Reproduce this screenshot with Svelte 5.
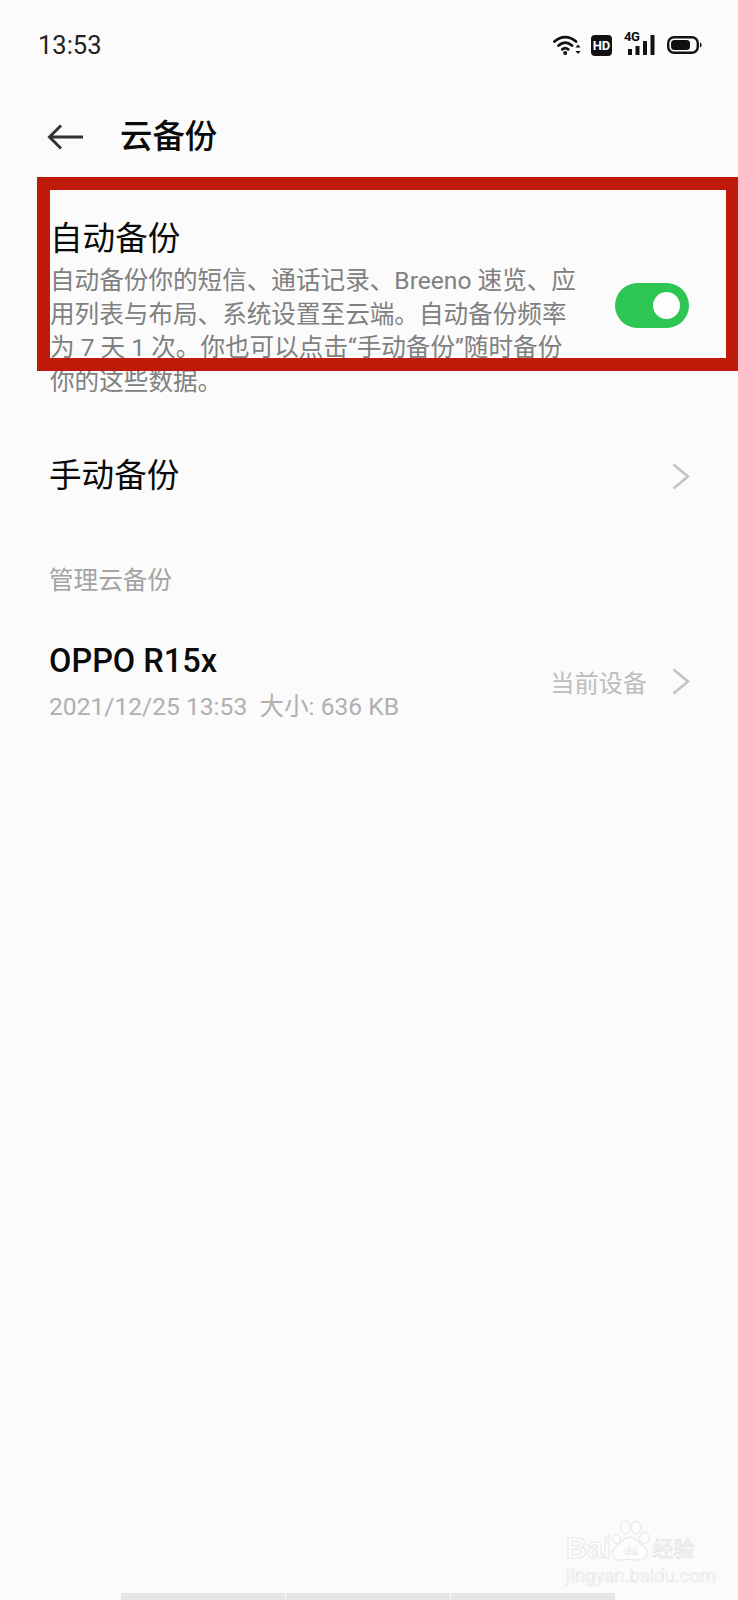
<script>
	const description = '自动备份你的短信、通话记录、Breeno 速览、应用列表与布局、系统设置至云端。自动备份频率为 7 天 1 次。你也可以点击“手动备份”随时备份你的这些数据。';
</script>

<div class="page">
	<div class="status">
		<span class="time">13:53</span>
		<div class="status-icons">
			<svg class="wifi" width="28" height="20" viewBox="0 0 28 20" fill="none" stroke="#111" stroke-width="2.8" stroke-linecap="round">
				<path d="M1.5 6.5C8 .6 16.5 .6 23 6.5" />
				<path d="M5.5 10.5C9.8 6.8 14.7 6.8 19 10.5" />
				<path d="M9.3 14.3C11.2 12.8 13.3 12.8 15.2 14.3" />
				<circle cx="12.2" cy="18" r="2" fill="#111" stroke="none" />
				<path d="M25 9.5l2.6 3h-5.2zM25 19l2.6-3h-5.2z" fill="#111" stroke="none" />
			</svg>
			<span class="hd">HD</span>
			<div class="signal">
				<span class="fourg">4G</span>
				<svg width="27" height="20" viewBox="0 0 27 20" fill="#111">
					<rect x="0" y="14" width="4" height="6" />
					<rect x="7.5" y="11" width="4" height="9" />
					<rect x="15" y="6" width="4" height="14" />
					<rect x="22.5" y="0" width="4" height="20" />
				</svg>
			</div>
			<svg class="battery" width="35" height="18" viewBox="0 0 35 18">
				<rect x="1.2" y="1.2" width="29.6" height="15.6" rx="6" fill="none" stroke="#111" stroke-width="2.4" />
				<rect x="4" y="4" width="19" height="10" rx="3.5" fill="#111" />
				<path d="M33 6.5c1.2.6 1.6 1.4 1.6 2.5s-.4 1.9-1.6 2.5z" fill="#111" />
			</svg>
		</div>
	</div>

	<header class="bar">
		<svg class="back" width="36" height="26" viewBox="0 0 36 26" fill="none" stroke="#333" stroke-width="3">
			<path d="M36 13H3" />
			<path d="M14 1.5L2.5 13L14 24.5" />
		</svg>
		<h1>云备份</h1>
	</header>

	<section class="auto">
		<div class="auto-text">
			<h2>自动备份</h2>
			<p>{description}</p>
		</div>
		<div class="toggle"><span class="knob"></span></div>
	</section>

	<div class="row manual">
		<span class="row-title">手动备份</span>
		<svg class="chevron" width="18" height="27" viewBox="0 0 18 27" fill="none" stroke="#c4c4c4" stroke-width="2.6">
			<path d="M1.5 1.5L16 13.5L1.5 25.5" />
		</svg>
	</div>

	<div class="section-label">管理云备份</div>

	<div class="row device">
		<div class="device-text">
			<div class="device-name">OPPO R15x</div>
			<div class="device-meta">2021/12/25 13:53&nbsp; 大小: 636 KB</div>
		</div>
		<span class="current">当前设备</span>
		<svg class="chevron" width="18" height="27" viewBox="0 0 18 27" fill="none" stroke="#c4c4c4" stroke-width="2.6">
			<path d="M1.5 1.5L16 13.5L1.5 25.5" />
		</svg>
	</div>

	<!-- annotation drawn over the screenshot -->
	<div class="annotation"></div>

	<div class="watermark">
		<div class="wm-top">
			<span class="wm-bai">Bai</span>
			<svg width="40" height="42" viewBox="0 0 40 44" fill="#fdfdfd" stroke="#e8e8e8" stroke-width="1.2">
				<ellipse cx="14" cy="8" rx="5" ry="6.5" />
				<ellipse cx="25" cy="8" rx="5" ry="6.5" />
				<ellipse cx="34" cy="19" rx="5" ry="6" />
				<ellipse cx="5" cy="20" rx="3.5" ry="5" />
				<path d="M19 18C25 18 27 24 34 28C40 33 37 43 27 42C21 41 15 41 10 42C1 43 -2 34 4 28C10 24 12 18 19 18Z" />
				<text x="19.5" y="37" text-anchor="middle" class="wm-du">du</text>
			</svg>
			<span class="wm-cn">经验</span>
		</div>
		<div class="wm-url">jingyan.baidu.com</div>
	</div>

	<div class="nav-strip">
		<span></span>
		<span></span>
		<span></span>
	</div>
</div>

<style>
:global(body) {
	margin: 0;
	background: #fbfbfb;
}
.page {
	position: relative;
	width: 738px;
	height: 1600px;
	overflow: hidden;
	background: #fbfbfb;
	color: #0a0a0a;
	font-family: Roboto, 'Noto Sans CJK SC', sans-serif;
}
.status {
	display: flex;
	justify-content: space-between;
	align-items: center;
	height: 90px;
	padding: 0 36px 0 38px;
}
.time {
	font-size: 25.5px;
	color: #222;
}
.status-icons {
	display: flex;
	align-items: center;
}
.hd {
	width: 21px;
	height: 21px;
	margin-left: 10px;
	border-radius: 4px;
	background: #111;
	color: #fff;
	font-size: 13px;
	font-weight: 700;
	line-height: 21px;
	text-align: center;
}
.signal {
	position: relative;
	width: 27px;
	height: 20px;
	margin-left: 16px;
}
.signal svg {
	display: block;
}
.fourg {
	position: absolute;
	top: -5px;
	left: -4px;
	font-size: 13px;
	font-weight: 700;
	line-height: 14px;
	letter-spacing: -.5px;
}
.battery {
	margin-left: 12px;
}
.bar {
	display: flex;
	align-items: center;
	height: 94px;
	padding-left: 47px;
}
.bar h1 {
	margin: 0 0 0 37px;
	font-size: 32.4px;
	font-weight: 500;
	line-height: 40px;
}
.auto {
	display: flex;
	align-items: center;
	justify-content: space-between;
	padding: 33px 49px 0 50px;
}
.auto-text {
	width: 530px;
}
.auto h2 {
	margin: 0;
	font-size: 32.6px;
	font-weight: 400;
	line-height: 44px;
}
.auto p {
	margin: 3px 0 0;
	color: #808080;
	font-size: 24.6px;
	line-height: 33.5px;
}
.toggle {
	position: relative;
	width: 74px;
	height: 45px;
	margin-top: -4px;
	border-radius: 23px;
	background: #2dc653;
}
.knob {
	position: absolute;
	top: 9px;
	right: 9px;
	width: 27px;
	height: 27px;
	border-radius: 50%;
	background: #fdfdfd;
}
.row {
	display: flex;
	align-items: center;
	padding: 0 48px 0 49px;
}
.manual {
	justify-content: space-between;
	margin-top: 53px;
	height: 50px;
}
.row-title {
	font-size: 32.6px;
	line-height: 50px;
}
.section-label {
	margin-top: 63px;
	padding-left: 49px;
	color: #a3a3a3;
	font-size: 24.6px;
	line-height: 34px;
}
.device {
	margin-top: 41px;
}
.device-text {
	flex: 1;
}
.device-name {
	font-size: 32.5px;
	font-weight: 500;
	line-height: 44px;
}
.device-meta {
	margin-top: 7px;
	color: #b0b0b0;
	font-size: 24.6px;
	line-height: 34px;
}
.current {
	margin-right: 25px;
	color: #bdbdbd;
	font-size: 24.2px;
}
.annotation {
	position: absolute;
	top: 177px;
	left: 37px;
	right: 0;
	height: 194px;
	box-sizing: border-box;
	border: 13.5px solid #bd1a0a;
	border-right-width: 12px;
}
.watermark {
	position: absolute;
	left: 566px;
	top: 1518px;
	width: 134px;
	text-align: center;
}
.wm-top {
	display: flex;
	align-items: flex-end;
	height: 44px;
}
.wm-bai {
	color: #fdfdfd;
	font-family: 'Liberation Sans', sans-serif;
	font-size: 29px;
	font-weight: 700;
	line-height: 28px;
	-webkit-text-stroke: 1px #e8e8e8;
}
.wm-du {
	fill: #fdfdfd;
	font-size: 13px;
	font-weight: 700;
	stroke-width: .6px;
}
.wm-cn {
	margin-left: 1px;
	color: #fdfdfd;
	font-size: 21px;
	line-height: 26px;
	-webkit-text-stroke: 1px #e8e8e8;
}
.wm-url {
	margin-top: 5px;
	color: #fdfdfd;
	font-size: 18.5px;
	line-height: 18px;
	white-space: nowrap;
	-webkit-text-stroke: .7px #e8e8e8;
}
.nav-strip {
	position: absolute;
	left: 121px;
	bottom: 0;
	display: flex;
	gap: 1px;
	width: 494px;
	height: 7px;
}
.nav-strip span {
	flex: 1;
	background: #e6e6e6;
}
</style>
